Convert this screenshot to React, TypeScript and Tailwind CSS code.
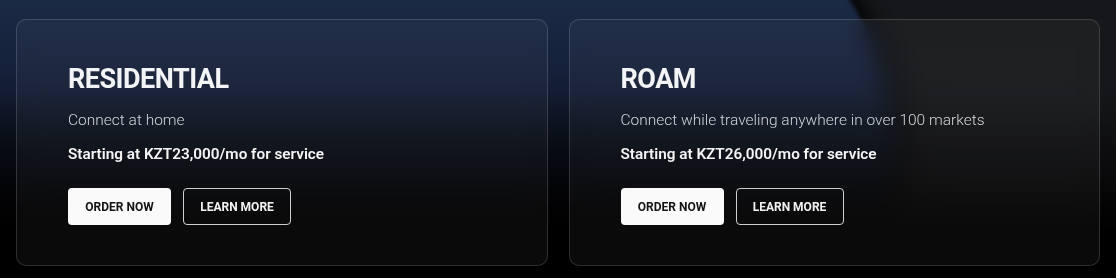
import React from "react";

type Plan = {
  title: string;
  blurb: string;
  price: string;
};

const plans: Plan[] = [
  {
    title: "RESIDENTIAL",
    blurb: "Connect at home",
    price: "Starting at KZT23,000/mo for service",
  },
  {
    title: "ROAM",
    blurb: "Connect while traveling anywhere in over 100 markets",
    price: "Starting at KZT26,000/mo for service",
  },
];

function PlanCard({ plan }: { plan: Plan }) {
  return (
    <div className="h-[247px] rounded-[10px] border border-white/15 bg-white/[0.04] backdrop-blur-md pl-[51px] pt-[43px]">
      <h2 className="text-[27px] leading-[32px] font-bold tracking-[-0.5px] text-[#f3f4f6]">
        {plan.title}
      </h2>
      <p className="mt-[15px] text-[15.5px] leading-[20px] font-light text-[#d2d5db]">
        {plan.blurb}
      </p>
      <p className="mt-[14px] text-[15.3px] leading-[20px] font-semibold text-[#f5f5f5]">
        {plan.price}
      </p>
      <div className="mt-[24px] flex gap-[12px]">
        <button className="h-[37px] w-[103px] rounded-[4px] bg-[#fafafa] text-[12px] font-bold text-[#141414]">
          ORDER NOW
        </button>
        <button className="h-[37px] w-[108px] rounded-[4px] border border-white/80 text-[12px] font-bold text-[#f2f2f2]">
          LEARN MORE
        </button>
      </div>
    </div>
  );
}

export default function App() {
  return (
    <div
      className="relative h-[278px] w-[1116px] overflow-hidden bg-[#16171a]"
      style={{ fontFamily: "Roboto, 'Liberation Sans', sans-serif" }}
    >
      {/* lit planet limb: blue on the left, dark space to the right of the curve */}
      <div className="pointer-events-none absolute left-[-293px] top-[-251px] h-[802px] w-[1186px] rounded-[50%] bg-[linear-gradient(180deg,#1b2a46_31%,#15213a_40%,#0d1320_50%,#08090d_60%)] shadow-[10px_0_18px_rgba(0,0,0,0.85)] blur-[2px]" />
      <div className="pointer-events-none absolute inset-x-0 top-[90px] h-[188px] bg-[linear-gradient(180deg,transparent,#000_75%)]" />

      <div className="relative grid grid-cols-2 gap-[21px] px-[16px] pt-[19px]">
        {plans.map((p) => (
          <PlanCard key={p.title} plan={p} />
        ))}
      </div>
    </div>
  );
}
